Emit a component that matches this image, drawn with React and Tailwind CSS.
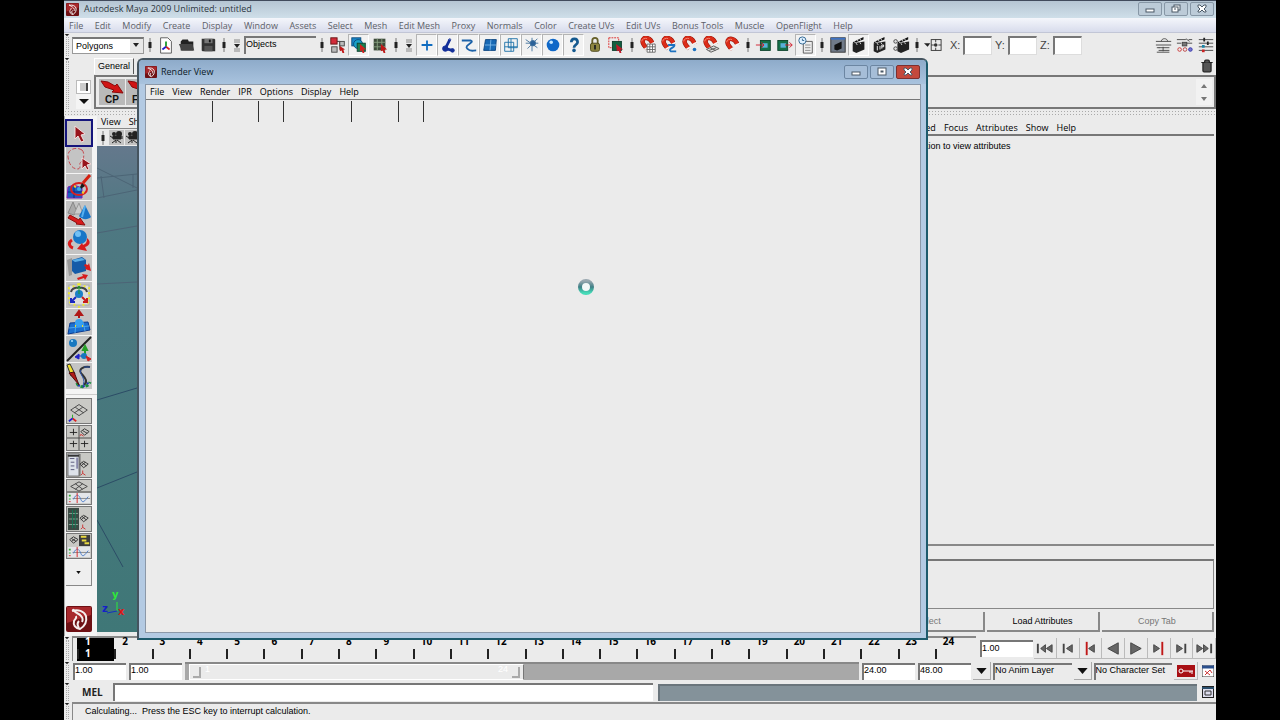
import React from 'react';
import { Trash2 } from 'lucide-react';

const MAIN_MENU = ['File', 'Edit', 'Modify', 'Create', 'Display', 'Window', 'Assets', 'Select', 'Mesh', 'Edit Mesh', 'Proxy', 'Normals', 'Color', 'Create UVs', 'Edit UVs', 'Bonus Tools', 'Muscle', 'OpenFlight', 'Help'];
const RENDER_MENU = ['File', 'View', 'Render', 'IPR', 'Options', 'Display', 'Help'];
const ATTR_MENU = ['List', 'Selected', 'Focus', 'Attributes', 'Show', 'Help'];
const FRAMES = Array.from({ length: 24 }, (_, i) => i + 1);

function Magnet() {
    return (
        <g fill="none">
            <path d="M15 9C13 1 4 0 4 6c0 3 2 5 5 8" stroke="#8e1208" strokeWidth="5" />
            <path d="M15 9C13 1 4 0 4 6c0 3 2 5 5 8" stroke="#dc2c18" strokeWidth="4" />
            <path d="M3 6c0-3 4-4 6-3" stroke="#f58a78" />
            <path d="M12 10l6-3M6 15l5-3" stroke="#f4f4f4" strokeWidth="2" />
            <path d="M10 10C7 7 9 5 12 9" fill="#ebebeb" />
        </g>
    );
}

function Clapper() {
    return (
        <g>
            <path d="M3 8l13-2v9l-9 4-4-2z" fill="#222" />
            <path d="M3 7L15 1v3L4 8z" fill="#111" />
            <path d="M5 6l1 2M8 4l1 2M11 3l1 2M7 8l1 2M11 7l1 2" stroke="#ddd" />
        </g>
    );
}

// 20x20 drawings for the status line
const STATUS_ICONS = {
    newScene: <g><path d="M4 2h8l4 4v13H4z" fill="#fff" stroke="#555" /><path d="M10 12V6" stroke="#1a9a2a" strokeWidth="2" /><path d="M10 12l4 3" stroke="#d22" strokeWidth="2" /><path d="M10 12l-4 3" stroke="#22c" strokeWidth="2" /></g>,
    open: <g><path d="M3 16V6l2-2h6l1 2h5v10z" fill="#222" /><path d="M1 9h15l2 7H4z" fill="#444" /></g>,
    save: <g><path d="M3 3h14l1 1v13H4l-1-1z" fill="#333" /><path d="M6 3h9v5H6z" fill="#777" /><path d="M11 4h2v3h-2z" fill="#111" /><path d="M6 11h9v6H6z" fill="#555" /></g>,
    hierarchy: <g><path d="M7 6h5v9h4M12 8h3" fill="none" stroke="#333" /><rect x="2" y="2" width="7" height="7" fill="#d22b3a" stroke="#611" /><rect x="3" y="12" width="6" height="6" fill="#bbb" stroke="#444" /><rect x="12" y="6" width="5" height="5" fill="#bbb" stroke="#444" /><path d="M12 11l6 4-2 0 1 4-2 0-1-3-2 1z" fill="#c01818" /></g>,
    object: <g><rect x="2" y="2" width="10" height="9" fill="#1786c8" stroke="#0b4a7a" /><circle cx="9" cy="9" r="5" fill="#18a0c8" stroke="#0b4a7a" /><rect x="8" y="8" width="9" height="9" fill="#1a8050" stroke="#0b4030" /><path d="M11 9l7 6-3 0 1 4-2 0-1-3-2 1z" fill="#d02020" /></g>,
    component: <g><path d="M3 3h13v13H3z" fill="#3d4a3a" /><path d="M3 7h13M3 12h13M7 3v13M12 3v13" stroke="#88a080" /><path d="M11 9l7 6-3 0 1 4-2 0-1-3-2 1z" fill="#c01818" /></g>,
    plus: <path d="M10 5v11M4 10h12" stroke="#0f6cc0" strokeWidth="2" />,
    joint: <g fill="none" stroke="#14309a"><path d="M12 4L7 14l8 2" strokeWidth="3" /><circle cx="12" cy="4" r="1" /><circle cx="7" cy="14" r="3" fill="#14309a" /><circle cx="15" cy="16" r="2" fill="#14309a" /></g>,
    curve: <path d="M2 5h10c5 2-8 5-4 9s6 2 10 2" fill="none" stroke="#1c62a8" strokeWidth="2" />,
    surface: <g><path d="M5 4h12l-1 12H3z" fill="#1769b5" stroke="#0d447e" /><path d="M11 4l-1 12M4 10h13" stroke="#7db8e8" /></g>,
    deform: <g fill="none" stroke="#1c70a8"><path d="M3 7h10v10H3zM7 3h10v10H7zM3 12h14M10 3v14" /></g>,
    dynamics: <g stroke="#3f6f9c"><path d="M3 4l13 9M10 2v15M16 3L5 14M3 8h14" /><circle cx="11" cy="8" r="3" fill="#2b6299" /></g>,
    rendering: <g><circle cx="10" cy="10" r="7" fill="#0f68c8" /><circle cx="8" cy="7" r="2" fill="#c4e6ff" /></g>,
    misc: <g><path d="M7 7c0-5 7-5 7 0 0 3-4 2-4 6" fill="none" stroke="#14598f" strokeWidth="3" /><circle cx="10" cy="16" r="2" fill="#14598f" /></g>,
    lock: <g><path d="M7 9V5c0-4 6-4 6 0v4" fill="none" stroke="#665f28" strokeWidth="2" /><rect x="5" y="8" width="10" height="9" rx="2" fill="#8d8540" stroke="#4a4518" /><path d="M10 10v5" stroke="#222" strokeWidth="2" /></g>,
    highlight: <g><rect x="2" y="2" width="11" height="11" fill="none" stroke="#d22" strokeDasharray="2 1" /><rect x="6" y="6" width="10" height="10" fill="#126040" stroke="#0a3a2a" /><path d="M10 9l8 6-3 0 1 4-2 0-1-3-2 1z" fill="#c01828" /></g>,
    snapGrid: <g><Magnet /><path d="M9 9h9v9H9zM9 12h9M9 15h9M12 9v9M15 9v9" fill="#fff" stroke="#666" /></g>,
    snapCurve: <g><Magnet /><path d="M9 10h7c1 3-8 4-4 7h6" fill="none" stroke="#1c72c0" strokeWidth="2" /></g>,
    snapPoint: <g><Magnet /><circle cx="15" cy="15" r="2" fill="#1c72c0" /></g>,
    snapPlane: <g><Magnet /><path d="M5 15l8-4 6 3-9 4zM9 13l6 3M8 16l8-3" fill="#ddd" stroke="#555" /></g>,
    makeLive: <g transform="translate(1 1)"><Magnet /></g>,
    inputs: <g><rect x="6" y="5" width="11" height="11" fill="#157048" stroke="#0a4028" /><rect x="8" y="8" width="6" height="5" fill="#58b0d8" /><path d="M1 10h9M7 7l3 3-3 3" fill="none" stroke="#d01828" /></g>,
    outputs: <g><rect x="2" y="5" width="11" height="11" fill="#157048" stroke="#0a4028" /><rect x="5" y="8" width="6" height="5" fill="#58b0d8" /><path d="M10 10h8M15 7l3 3-3 3" fill="none" stroke="#d01828" /></g>,
    history: <g><path d="M7 6h10v13H7z" fill="#eee" stroke="#555" /><path d="M9 10h6M9 13h6M9 16h6" stroke="#888" /><circle cx="6" cy="5" r="4" fill="#dff0ff" stroke="#28608c" /><path d="M6 3v2h2" fill="none" stroke="#28608c" /></g>,
    renderView: <g><rect x="2" y="2" width="16" height="16" fill="#707a88" stroke="#333" /><path d="M2 3h16" stroke="#3d72c4" strokeWidth="2" /><path d="M6 10l8-4v8l-5 2-3-1z" fill="#111" /></g>,
    render: <Clapper />,
    ipr: <g><Clapper /><path d="M7 11v5M10 11v4M12 14v-4h2v2h-2" stroke="#fff" fill="none" /></g>,
    renderSettings: <g><g transform="translate(3 0)"><Clapper /></g><circle cx="4" cy="6" r="2" fill="#ddd" stroke="#444" /><circle cx="4" cy="14" r="2" fill="#ddd" stroke="#444" /></g>,
    coords: <g><path d="M0 8h7l-3 4z" fill="#222" /><rect x="8" y="4" width="11" height="12" fill="none" stroke="#333" /><path d="M8 10h3M16 10h3M13 4v3M13 13v3" stroke="#333" /><circle cx="13" cy="10" r="2" fill="#333" /></g>,
    attrEditor: <g fill="none" stroke="#444"><path d="M1 6h17M1 10h17M4 13h12M4 16h12M9 12v5" /><path d="M7 6c0-4 7-4 7 0" /><path d="M2 13h3M2 18h14" /></g>,
    toolSettings: <g fill="none" stroke="#444"><path d="M1 4h10M14 4h4M1 8h5M9 8h9M11 3l4 3" /><rect x="7" y="7" width="5" height="4" fill="#777" /><circle cx="4" cy="15" r="2" stroke="#c33" /><circle cx="10" cy="15" r="2" stroke="#b44" /><circle cx="16" cy="15" r="2" stroke="#33a" fill="#77c" /></g>,
    channelBox: <g fill="none" stroke="#444"><path d="M2 4h16M2 8h16M2 12h16M2 16h16" /><path d="M8 2v4M12 6v4" stroke="#222" strokeWidth="2" /><path d="M7 10v3" stroke="#1784a8" strokeWidth="3" /><path d="M7 15v3" stroke="#c22" strokeWidth="3" /></g>,
};

function StatusButton({ name, pressed }) {
    return (
        <button aria-label={name} className={`flex h-[22px] w-[21px] shrink-0 items-center justify-center border ${pressed ? 'border-r-white border-b-white border-t-[#b4b4b4] border-l-[#b4b4b4] bg-[#f2f2f2]' : 'border-transparent'}`}>
            <svg viewBox="0 0 20 20" className="h-[18px] w-[18px] shrink-0">{STATUS_ICONS[name]}</svg>
        </button>
    );
}

function Separator() {
    return (
        <span className="flex w-[11px] shrink-0 items-center justify-center">
            <svg viewBox="0 0 5 20" className="h-5 w-[5px]"><path d="M3 3v14" stroke="#777" /><path d="M3 7v6" stroke="#222" strokeWidth="3" /></svg>
        </span>
    );
}

function Collapse() {
    return (
        <button aria-label="Show or hide icons" className="flex w-[15px] shrink-0 items-center justify-center">
            <svg viewBox="0 0 8 16" className="h-4 w-2" fill="none"><path d="M1 3h6M1 5h6M1 12h6M1 14h6" stroke="#888" /><path d="M1 7h6L4 11z" fill="#222" /></svg>
        </button>
    );
}

function Handle() {
    return (
        <span className="flex w-2 shrink-0 flex-col self-stretch">
            <svg viewBox="0 0 6 4" className="mt-px h-[3px] w-[6px]"><path d="M0 0h6L3 3z" fill="#222" /></svg>
            <span className="mb-px ml-[2px] w-[3px] flex-1 border-x border-dotted border-[#aaa]" />
        </span>
    );
}

function MayaLogo({ className }) {
    return (
        <svg viewBox="0 0 26 26" className={className}>
            <rect width="26" height="26" rx="2" fill="#6e1014" />
            <path d="M1 1h24v8L1 17z" fill="#a8282c" />
            <g fill="none" stroke="#f4eded" strokeWidth="2">
                <path d="M6 5c6-2 12 0 14 5 1 5-1 10-6 13-5-1-7-4-6-8 1-2 3-3 2-5" />
                <path d="M7 3c1 4 6 4 8 7 2 2 2 4 1 6M13 22c-2-3-2-5 0-7" />
            </g>
        </svg>
    );
}

function WindowButton({ label, children, className }) {
    return (
        <button aria-label={label} className={`flex h-[14px] w-6 items-center justify-center rounded-xs border ${className}`}>
            <svg viewBox="0 0 12 10" className="h-[10px] w-3" fill="#fff" stroke="#4a5866">{children}</svg>
        </button>
    );
}

const WINDOW_GLYPHS = {
    min: <rect x="2" y="5" width="8" height="3" />,
    max: <g><rect x="2" y="1" width="8" height="7" /><rect x="5" y="4" width="2" height="1" /></g>,
    restore: <g><rect x="4" y="1" width="6" height="5" /><rect x="2" y="3" width="6" height="5" /><path d="M4 5h2" /></g>,
    close: <path d="M2 1h2l2 2 2-2h2v2L8 5l2 2v1H8L6 6 4 8H2V7l2-2-2-2z" />,
};

function TitleBar() {
    return (
        <header className="flex h-[18px] items-center border-t border-[#414b5c] bg-linear-to-b from-[#b5c5d3] to-[#cfdfe9] pl-[2px]">
            <MayaLogo className="mr-[5px] h-[13px] w-[13px]" />
            <h1 className="flex-1 pb-px font-['Open_Sans',sans-serif] text-[9px] text-[#2c3640]">Autodesk Maya 2009 Unlimited: untitled</h1>
            <div className="flex gap-[2px] pr-[2px] pb-px">
                <WindowButton label="Minimize" className="border-[#8797a6] bg-[#bccbd8]">{WINDOW_GLYPHS.min}</WindowButton>
                <WindowButton label="Restore" className="border-[#8797a6] bg-[#bccbd8]">{WINDOW_GLYPHS.restore}</WindowButton>
                <WindowButton label="Close" className="border-[#8797a6] bg-[#bccbd8]">{WINDOW_GLYPHS.close}</WindowButton>
            </div>
        </header>
    );
}

function MenuBar({ items, className }) {
    return (
        <nav className={`flex items-center whitespace-nowrap font-['Open_Sans',sans-serif] text-[9px] ${className}`}>
            {items.map((item) => <button key={item}>{item}</button>)}
        </nav>
    );
}

function Coord({ axis }) {
    return (
        <label className="flex items-center text-[11px] text-[#444]">
            <span className="w-4 pl-[3px]">{axis}:</span>
            <input type="text" className="h-[19px] w-[29px] border border-t-2 border-l-2 border-[#ddd] border-t-[#777] border-l-[#777] bg-white" />
        </label>
    );
}

function StatusLine() {
    return (
        <section className="flex h-6 items-center">
            <Handle />
            <select aria-label="Menu set" className="h-[17px] w-[72px] shrink-0 appearance-none border border-t-2 border-[#999] border-t-[#777] bg-white bg-[linear-gradient(#e8e8e8,#e8e8e8)] bg-[length:13px_100%] bg-right bg-no-repeat pl-[3px] text-[9px] leading-[12px]">
                <option>Polygons</option>
            </select>
            <svg viewBox="0 0 6 4" className="-ml-[11px] mr-[5px] h-1 w-[6px] shrink-0"><path d="M0 0h6L3 4z" fill="#222" /></svg>
            <Separator />
            <StatusButton name="newScene" /><StatusButton name="open" /><StatusButton name="save" />
            <Separator />
            <Collapse />
            <input aria-label="Selection mask" type="text" defaultValue="Objects" className="h-[18px] w-[72px] shrink-0 border-t-2 border-l-2 border-[#777] bg-[#ebebeb] pb-1 text-[9px]" />
            <Separator />
            <StatusButton name="hierarchy" /><StatusButton name="object" pressed /><StatusButton name="component" />
            <Separator />
            <Collapse />
            {['plus', 'joint', 'curve', 'surface', 'deform', 'dynamics', 'rendering', 'misc'].map((n) => <StatusButton key={n} name={n} pressed />)}
            <StatusButton name="lock" /><StatusButton name="highlight" />
            <Separator />
            {['snapGrid', 'snapCurve', 'snapPoint', 'snapPlane', 'makeLive'].map((n) => <StatusButton key={n} name={n} />)}
            <Separator />
            <StatusButton name="inputs" /><StatusButton name="outputs" /><StatusButton name="history" pressed />
            <Separator />
            <StatusButton name="renderView" /><StatusButton name="render" pressed /><StatusButton name="ipr" /><StatusButton name="renderSettings" />
            <Separator />
            <StatusButton name="coords" />
            <div className="flex pl-1"><Coord axis="X" /><Coord axis="Y" /><Coord axis="Z" /></div>
            <div className="ml-auto flex"><StatusButton name="attrEditor" /><StatusButton name="toolSettings" /><StatusButton name="channelBox" /></div>
        </section>
    );
}

function ShelfButton({ label }) {
    return (
        <button aria-label={label} className="h-[26px] w-[26px] shrink-0 bg-[#b9b9b9]">
            <svg viewBox="0 0 26 26" className="h-full w-full">
                <path d="M2 2l7 1 7 4 2-2 6 9-11-1 2-2-9-3z" fill="#d01414" stroke="#8a0a0a" />
                <text x="6" y="24" fontFamily="Liberation Sans, sans-serif" fontSize="10" fontWeight="bold" fill="#111">{label}</text>
            </svg>
        </button>
    );
}

function Shelf() {
    return (
        <section className="flex h-[53px]">
            <Handle />
            <div className="flex w-[22px] flex-col justify-end pb-px">
                <button aria-label="Shelf tabs" className="ml-1 flex h-[14px] w-[15px] items-center justify-center border border-[#bbb] bg-white"><span className="h-2 w-2 border-r-2 border-[#444] bg-[#ccc]" /></button>
                <button aria-label="Shelf menu" className="ml-1 flex h-[15px] w-[15px] items-center justify-center bg-[#f4f4f4]">
                    <svg viewBox="0 0 10 6" className="h-[6px] w-[10px]"><path d="M0 0h10L5 5z" fill="#111" /></svg>
                </button>
            </div>
            <div className="flex min-w-0 flex-1 flex-col">
                <div className="flex h-[18px] items-center justify-between">
                    <button className="h-4 border-t border-l border-r border-white border-r-[#555] px-[3px] text-[9px]">General</button>
                    <button aria-label="Delete shelf item" className="pr-[2px]"><Trash2 className="h-[14px] w-[14px] fill-[#555] text-[#222]" /></button>
                </div>
                <div className="flex h-[34px] gap-px border-2 border-[#777] p-[2px] pl-[3px]">
                    <ShelfButton label="CP" />
                    <ShelfButton label="FT" />
                    <div className="ml-auto flex w-4 flex-col items-center justify-around bg-[#f2f2f2]">
                        <svg viewBox="0 0 6 4" className="h-1 w-[6px]"><path d="M0 4h6L3 0z" fill="#777" /></svg>
                        <svg viewBox="0 0 6 4" className="h-1 w-[6px]"><path d="M0 0h6L3 4z" fill="#777" /></svg>
                    </div>
                </div>
            </div>
        </section>
    );
}

const axes = <g><path d="M6 21v-4" stroke="#2a2" /><path d="M6 21l4 3" stroke="#d22" strokeWidth="2" /><path d="M6 21l-4 3" stroke="#22c" strokeWidth="2" /></g>;
const smallGrid = <path d="M14 12l4-3 5 3-5 4zM16 10l5 4M20 10l-5 4" fill="none" stroke="#333" />;
const wave = <g><rect x="1" y="14" width="24" height="11" fill="#e4e6ea" /><path d="M3 16v2M3 20v1" stroke="#3a3" strokeWidth="2" /><path d="M3 23v1" stroke="#d33" strokeWidth="2" /><path d="M6 20h19" stroke="#888" /><path d="M7 21c3-7 6-5 8 0s4 2 8-3" fill="none" stroke="#4a7cc8" /><path d="M11 14v11" stroke="#d22" /></g>;

// 26x26 drawings for the tool box and the layout shortcuts
const TOOLS = [
    ['Select', <path d="M9 6l0 13 3-3 3 6 3-1-3-6 4-1z" fill="#98141c" stroke="#f3dede" strokeWidth="1" />],
    ['Lasso', <g><path d="M16 3C9-1 1 3 2 10s4 12 10 12c4-1 0-5 3-7s4-9 1-12z" fill="none" stroke="#c44a50" strokeWidth="1" strokeDasharray="4 2" /><path d="M16 11v11l3-3 2 4 2-1-2-4 4-1z" fill="#98141c" stroke="#f3dede" /></g>],
    ['Paint select', <g><path d="M2 13l6-2 8 3 0 10H1z" fill="#1c5fc0" stroke="#7a20b8" /><path d="M2 18h14M8 12v12" stroke="#0c2a80" /><ellipse cx="13" cy="15" rx="8" ry="6" fill="none" stroke="#d82020" strokeWidth="2" /><path d="M12 17l4-8 3 3z" fill="#1a1a1a" /><path d="M17 9l7-8" stroke="#d42010" strokeWidth="3" /><circle cx="13" cy="15" r="2" fill="#38b0e8" /><path d="M8 12l2 1M16 18l2 1" stroke="#f8d020" strokeWidth="2" /></g>],
    ['Move', <g><path d="M2 12L7 1l4 10-3 3z" fill="#aaa" stroke="#888" /><path d="M8 13l5-11 4 11z" fill="#ccc" stroke="#999" /><path d="M13 15l6-11 6 12c-3 3-9 3-12-1z" fill="#1874c8" /><path d="M19 5l-3 11" stroke="#55b0f0" strokeWidth="2" /><path d="M4 14l9 5 1-2 5 7-9-1 1-1-9-5z" fill="#d81c1c" stroke="#901010" /></g>],
    ['Rotate', <g><path d="M6 12c-5 3-2 7 1 8" fill="none" stroke="#d81c1c" strokeWidth="3" /><circle cx="14" cy="9" r="7" fill="#1877c8" /><circle cx="12" cy="6" r="3" fill="#72c0f4" /><path d="M21 10c5 4 2 8-2 9l2 4-10-2 5-6 1 2c3-1 4-3 4-7z" fill="#d81c1c" /></g>],
    ['Scale', <g><path d="M1 5l5-2v17l-3 1z" fill="#999" /><path d="M6 5l10-3 4 3v11l-11 3-3-3z" fill="#145ba8" /><path d="M6 5l10-2 3 2-10 2z" fill="#58aee8" /><path d="M19 9l3 1 1-2 2 8-6-2 1-2-2-1z" fill="#d81c1c" /><path d="M11 23l6-2-1-2 6 1-3 5-1-2-6 2z" fill="#d81c1c" /></g>],
    ['Universal manipulator', <g><rect x="3" y="3" width="20" height="20" fill="#ddd" stroke="#aaa" /><path d="M13 2l10 4v14l-10 5L3 20V6z" fill="none" stroke="#eee830" strokeDasharray="2 3" strokeWidth="2" /><path d="M5 10c1-6 15-6 16 0" fill="none" stroke="#444" strokeWidth="2" /><circle cx="13" cy="12" r="4" fill="#1c80c8" /><path d="M13 12V5M11 7l2-3 2 3" stroke="#189828" fill="none" /><path d="M10 15l-4 4M5 16l0 4h4" stroke="#1a28c0" strokeWidth="2" fill="none" /><path d="M16 15l4 4M21 16v4h-4" stroke="#c81c1c" strokeWidth="2" fill="none" /></g>],
    ['Soft modification', <g><path d="M4 14l18-1 2 8-22 4z" fill="#1c70d0" stroke="#0c3c90" /><path d="M3 19l20-2M10 14l-1 10M17 13l2 9" stroke="#48a8f0" /><circle cx="13" cy="14" r="4" fill="#38a0f0" /><path d="M13 9V4M10 6l3-4 3 4z" stroke="#b01818" strokeWidth="2" fill="#b01818" /><path d="M9 17h1M16 17h1" stroke="#f8e020" strokeWidth="2" /></g>],
    ['Show manipulator', <g><path d="M1 25L25 1" stroke="#222" strokeWidth="2" /><circle cx="7" cy="7" r="4" fill="#1878c0" /><circle cx="6" cy="5" r="1" fill="#a8e0ff" /><path d="M19 20v-6M17 14l2-4 2 4z" stroke="#28a028" fill="#28a028" strokeWidth="2" /><path d="M18 20h-6M13 18l-4 3 4 2z" stroke="#2020c8" fill="#2020c8" /><circle cx="18" cy="20" r="3" fill="#1878c0" /><path d="M20 20l5 3-3 2z" fill="#d02020" stroke="#d02020" /></g>],
    ['Last tool', <g fill="none"><path d="M24 4c-6-1-12 2-9 6s8 8 3 12" stroke="#333" strokeWidth="2" /><path d="M15 7c-3 4 7 9 1 17M18 4l6 0" stroke="#2850a8" /><path d="M11 20c1 5 11 5 13-1" stroke="#1c9040" strokeWidth="3" strokeDasharray="3 2" /><path d="M12 22c4 3 8 1 11-3" stroke="#2038b8" strokeWidth="2" strokeDasharray="2 3" /><path d="M1 2l3-1 5 10-4 2z" fill="#f0e030" stroke="#333" /><path d="M3 10l5-1 5 13z" fill="#b01c18" stroke="#501010" /></g>],
];
const LAYOUTS = [
    ['Single perspective', <g><path d="M4 12l9-6 9 6-9 6zM9 9l9 6M17 9l-9 6" fill="none" stroke="#444" strokeWidth="1" />{axes}</g>],
    ['Four views', <g><path d="M13 0v26M0 13h26" stroke="#444" /><path d="M7 3v7M3 7h8M7 16v7M3 19h8M19 16v7M15 19h8" stroke="#222" /><path d="M15 6l4-3 5 3-5 4zM17 5l5 3" fill="none" stroke="#333" /><path d="M15 9l-1 2M15 9l3 2" stroke="#c33" /></g>],
    ['Outliner', <g><rect x="1" y="1" width="12" height="24" fill="#dde2ea" stroke="#666" /><path d="M1 3h12" stroke="#333" strokeWidth="2" /><path d="M3 6h5M4 10h4M4 14h4M4 18h4" stroke="#557" /><path d="M11 5v12" stroke="#88a" strokeWidth="2" /><path d="M14 1v24" stroke="#555" />{smallGrid}<path d="M17 22v-3M17 22l3 2M17 22l-2 2" stroke="#c33" /></g>],
    ['Perspective and graph', <g><path d="M4 7l9-5 9 5-9 5zM9 4l8 6M17 4L9 10" fill="none" stroke="#444" />{wave}<path d="M0 13h26" stroke="#333" /></g>],
    ['Hypershade', <g><rect x="1" y="1" width="12" height="24" fill="#3c4a44" /><path d="M2 7h10M2 13h10M2 19h10" stroke="#8a9" /><path d="M6 3v20M9 3v20" stroke="#175" />{smallGrid}<path d="M17 22v-3M17 22l3 2M17 22l-2 2" stroke="#c33" /></g>],
    ['Hypergraph', <g><rect x="13" y="1" width="12" height="12" fill="#3c3c3c" /><path d="M15 3h6M16 7h5M19 10h5" stroke="#e8d840" strokeWidth="2" /><path d="M3 6l4-3 5 3-5 4zM5 5l5 3M9 5L5 8" fill="none" stroke="#333" />{wave}</g>],
];

function ToolBox() {
    return (
        <aside className="flex w-[33px] shrink-0 flex-col border-l border-[#aaa] bg-[#f4f4f4] pl-px">
            <div className="flex flex-col gap-px pt-1">
                {TOOLS.map(([name, icon], i) => (
                    <button key={name} aria-label={name} className={`h-[26px] w-[26px] bg-[#c4c4c4] ${i === 0 ? 'outline-2 -outline-offset-1 outline-[#15157c]' : ''}`}>
                        <svg viewBox="0 0 26 26" className="h-full w-full">{icon}</svg>
                    </button>
                ))}
            </div>
            <div className="mt-[5px] flex flex-col gap-px border-t border-[#ccc] pt-[3px]">
                {LAYOUTS.map(([name, icon]) => (
                    <button key={name} aria-label={name} className="h-[26px] w-[26px] border border-[#777] bg-[#c9c9c5]">
                        <svg viewBox="0 0 26 26" className="h-full w-full">{icon}</svg>
                    </button>
                ))}
                <button aria-label="More layouts" className="flex h-[26px] w-[26px] items-center justify-center border-r border-b border-[#888] bg-[#efefef]">
                    <svg viewBox="0 0 6 4" className="h-[3px] w-[5px]"><path d="M0 0h6L3 4z" fill="#111" /></svg>
                </button>
            </div>
            <MayaLogo className="mt-auto mb-1 h-[26px] w-[26px]" />
        </aside>
    );
}

function CameraButton({ label }) {
    return (
        <button aria-label={label} className="h-[15px] w-[15px] bg-[#c2c2c2]">
            <svg viewBox="0 0 15 15" className="h-full w-full"><circle cx="5" cy="4" r="2" fill="#222" /><circle cx="10" cy="4" r="3" fill="#222" /><path d="M4 6h8v3H4zM1 6l3 2M13 6v3M7 10l-4 3M8 10l4 3M7 10v3" fill="#222" stroke="#222" /></svg>
        </button>
    );
}

function Viewport() {
    return (
        <section className="flex min-w-0 flex-1 flex-col pb-1">
            <MenuBar items={['View', 'Shading', 'Lighting', 'Show', 'Renderer', 'Panels']} className="h-3 gap-2 pl-1 text-black" />
            <div className="flex h-[18px] items-center gap-px border-t border-[#888]">
                <Separator />
                <CameraButton label="Select camera" />
                <CameraButton label="Camera attributes" />
            </div>
            <div className="min-h-0 flex-1 bg-linear-to-b from-[#64788c] via-[#4e7882] via-15% to-[#3f7777]">
                <svg className="h-full w-full" fill="none">
                    <path d="M0 22l40 20M0 32l40-4M4 30l3 22M36 28v14M0 52l40-8M0 87l40-7M0 138l40-2" stroke="#4c6476" />
                    <path d="M0 254l40-12M0 342l40-16M0 374l26 47" stroke="#2c4c66" />
                    <path d="M20 465v-9" stroke="#2fe83a" />
                    <path d="M20 465l-10 2" stroke="#1430c0" />
                    <text x="15" y="452" fontFamily="DejaVu Sans, sans-serif" fontSize="10" fontWeight="bold" fill="#2fe83a">y</text>
                    <text x="5" y="466" fontFamily="DejaVu Sans, sans-serif" fontSize="10" fontWeight="bold" fill="#1420c8">z</text>
                    <text x="21" y="469" fontFamily="DejaVu Sans, sans-serif" fontSize="10" fontWeight="bold" fill="#e01818">x</text>
                </svg>
            </div>
        </section>
    );
}

function AttributeEditor() {
    return (
        <section className="flex w-[343px] shrink-0 flex-col pr-[2px]">
            <MenuBar items={ATTR_MENU} className="h-5 gap-2 border-b-2 border-[#777] pt-[6px] pl-[5px] text-black" />
            <p className="flex-1 pt-1 text-[9px] text-black">Make a selection to view attributes</p>
            <hr className="border-t-2 border-[#888]" />
            <textarea aria-label="Notes" className="mt-[13px] h-[50px] resize-none border border-t-2 border-[#888] border-t-[#777]" />
            <div className="mt-[3px] mb-1 flex h-5 gap-[2px] text-[9px]">
                <button disabled className="flex-1 border-r-2 border-b-2 border-[#888] pt-[2px] text-[#777]">Select</button>
                <button className="flex-1 border-r-2 border-b-2 border-[#888] pt-[2px]">Load Attributes</button>
                <button disabled className="flex-1 border-r-2 border-b-2 border-[#888] pt-[2px] text-[#777]">Copy Tab</button>
            </div>
        </section>
    );
}

const PLAYBACK = [
    ['Go to start', <g><path d="M3 5v10" strokeWidth="2" /><path d="M11 6v8l-5-4zM18 6v8l-6-4z" /></g>],
    ['Step back', <g><path d="M6 5v10" strokeWidth="2" /><path d="M15 6v8l-6-4z" /></g>],
    ['Previous key', <g><path d="M6 3v14" stroke="#c01818" strokeWidth="2" /><path d="M14 6v8l-6-4z" /></g>],
    ['Play backwards', <path d="M15 4v12L4 10z" />],
    ['Play forwards', <path d="M5 4v12l11-6z" />],
    ['Next key', <g><path d="M5 6v8l6-4z" /><path d="M14 3v14" stroke="#c01818" strokeWidth="2" /></g>],
    ['Step forward', <g><path d="M5 6v8l6-4z" /><path d="M14 5v10" strokeWidth="2" /></g>],
    ['Go to end', <g><path d="M2 6v8l6-4zM9 6v8l5-4z" /><path d="M17 5v10" strokeWidth="2" /></g>],
];

function NumberField({ label, value }) {
    return <input aria-label={label} type="text" defaultValue={value} className="h-[17px] w-[53px] shrink-0 border-t-2 border-l-2 border-[#777] bg-white pb-1 text-[9px]" />;
}

function TimeSlider() {
    return (
        <section className="flex h-[25px]">
            <Handle />
            <div className="flex min-w-0 flex-1 border-t-2 border-l border-[#888] pr-1 pl-1">
                {FRAMES.map((frame) => (
                    <div key={frame} className={`flex flex-1 flex-col justify-between font-['Open_Sans',sans-serif] text-[10px] font-bold ${frame === 1 ? 'bg-black text-white' : 'text-black'}`}>
                        <span className="pl-2 leading-[7px]">{frame}</span>
                        <span className="mb-[2px] h-[10px] border-l-2 border-[#222] pl-[6px] leading-[8px]">{frame === 1 ? '1' : ''}</span>
                    </div>
                ))}
            </div>
            <div className="flex w-[240px] shrink-0 items-center pl-1">
                <NumberField label="Current time" value="1.00" />
                <div className="flex flex-1 pl-px">
                    {PLAYBACK.map(([name, icon]) => (
                        <button key={name} aria-label={name} className="flex h-[21px] flex-1 items-center justify-center border-r border-b border-[#bbb]">
                            <svg viewBox="0 0 20 20" className="h-[19px] w-[19px]" fill="#666" stroke="#444">{icon}</svg>
                        </button>
                    ))}
                </div>
            </div>
        </section>
    );
}

function DropButton({ label }) {
    return (
        <button aria-label={label} className="flex h-[18px] w-[18px] shrink-0 items-center justify-center border-r border-b border-[#aaa]">
            <svg viewBox="0 0 12 7" className="h-[6px] w-[11px]"><path d="M0 0h12L6 7z" fill="#111" /></svg>
        </button>
    );
}

function RangeSlider() {
    return (
        <section className="flex h-5 items-center">
            <Handle />
            <div className="flex min-w-0 flex-1 items-center gap-[3px] pl-px">
                <NumberField label="Animation start" value="1.00" />
                <NumberField label="Playback start" value="1.00" />
                <div className="flex h-[18px] min-w-0 flex-1 border-t-2 border-[#888] bg-[#a8a8a8] pl-1">
                    <div className="flex w-1/2 items-center border border-white border-r-[#777] bg-[#ebebeb] px-[3px] text-[9px] leading-[9px] text-white">
                        <span className="h-[11px] w-2 border-r-2 border-b-2 border-[#aaa]" />
                        <span className="flex-1 self-start pl-1">1</span>
                        <span className="self-start pr-1">24</span>
                        <span className="h-[11px] w-2 border-r-2 border-b-2 border-[#aaa]" />
                    </div>
                </div>
                <NumberField label="Playback end" value="24.00" />
                <NumberField label="Animation end" value="48.00" />
            </div>
            <div className="flex w-[245px] shrink-0 items-center gap-[2px] pl-[2px]">
                <DropButton label="Animation layers" />
                <input aria-label="Animation layer" type="text" defaultValue="No Anim Layer" className="h-[17px] w-0 flex-1 border-t-2 border-l-2 border-[#777] pb-1 text-[9px]" />
                <DropButton label="Character sets" />
                <input aria-label="Character set" type="text" defaultValue="No Character Set" className="h-[17px] w-0 flex-1 border-t-2 border-l-2 border-[#777] pb-1 text-[9px]" />
                <button aria-label="Auto keyframe" className="flex h-[18px] w-6 items-center justify-center border-r border-b border-[#bbb]">
                    <svg viewBox="0 0 18 12" className="h-3 w-[18px] bg-[#a80f14]"><circle cx="4" cy="6" r="2" fill="none" stroke="#fff" /><path d="M6 6h10M15 6v3M13 6v2" stroke="#fff" /></svg>
                </button>
                <button aria-label="Preferences" className="flex h-[18px] w-4 items-center justify-center">
                    <svg viewBox="0 0 12 12" className="h-3 w-3"><path d="M0 0h12v12H0z" fill="#fff" stroke="#333" /><path d="M0 2h12" stroke="#2a4f8c" strokeWidth="3" /><path d="M3 10l5-5M8 5l2 3M3 6l5 4" stroke="#c33" /></svg>
                </button>
            </div>
        </section>
    );
}

function CommandLine() {
    return (
        <section className="mt-px flex h-5 items-center">
            <Handle />
            <label htmlFor="mel" className="w-[41px] shrink-0 pl-[10px] font-['Open_Sans',sans-serif] text-[10px] font-bold text-[#222]">MEL</label>
            <input id="mel" type="text" className="h-[18px] w-0 flex-1 border-t-2 border-l-2 border-[#777] bg-white" />
            <output className="mr-[3px] ml-[5px] h-[17px] flex-1 border-t-2 border-l-2 border-[#6a757c] bg-[#84929a]" />
            <button aria-label="Script editor" className="flex h-[18px] w-4 items-center justify-center">
                <svg viewBox="0 0 12 12" className="h-3 w-3"><path d="M0 0h12v12H0z" fill="#dde" stroke="#222" strokeWidth="2" /><path d="M0 2h12" stroke="#2a4f6c" strokeWidth="2" /><path d="M3 5h6v4H3z" fill="none" stroke="#333" /></svg>
            </button>
        </section>
    );
}

function RenderViewWindow() {
    return (
        <div role="dialog" aria-label="Render View" className="absolute top-[58px] right-[288px] bottom-[80px] left-[73px] flex flex-col rounded-t-md border-2 border-[#45545f] border-r-[#1d5a6c] border-b-[#1d5a6c] bg-[#b3cae3] pr-[5px] pb-[5px] pl-[6px]">
            <header className="-mr-[5px] -ml-[6px] flex h-6 shrink-0 items-center rounded-t bg-linear-to-b from-[#8eabca] to-[#a9c3de] px-[6px]">
                <MayaLogo className="mr-1 h-3 w-3" />
                <h2 className="flex-1 font-['Open_Sans',sans-serif] text-[9px] text-[#0c1a28]">Render View</h2>
                <div className="flex gap-[2px]">
                    <WindowButton label="Minimize" className="border-[#6c86a2] bg-[#a6bed8]">{WINDOW_GLYPHS.min}</WindowButton>
                    <WindowButton label="Maximize" className="border-[#6c86a2] bg-[#a6bed8]">{WINDOW_GLYPHS.max}</WindowButton>
                    <WindowButton label="Close" className="border-[#7c3030] bg-[#c4493c]">{WINDOW_GLYPHS.close}</WindowButton>
                </div>
            </header>
            <div className="flex min-h-0 flex-1 flex-col border border-[#8b98a8] bg-[#ebebeb]">
                <MenuBar items={RENDER_MENU} className="h-[14px] shrink-0 gap-2 pl-1 text-black" />
                {/* empty toolbar, only the group dividers are up */}
                <div className="flex h-[23px] shrink-0 border-t border-[#777] pt-px">
                    <span className="w-[67px] border-r border-[#333]" />
                    <span className="w-[46px] border-r border-[#333]" />
                    <span className="w-[25px] border-r border-[#333]" />
                    <span className="w-[68px] border-r border-[#333]" />
                    <span className="w-[47px] border-r border-[#333]" />
                    <span className="w-[25px] border-r border-[#333]" />
                </div>
            </div>
            {/* busy cursor */}
            <svg viewBox="0 0 16 16" className="absolute top-[219px] left-[439px] h-4 w-4">
                <defs>
                    <linearGradient id="busy" x1="0" y1="0" x2="0" y2="1">
                        <stop offset="0" stopColor="#9aa8b0" />
                        <stop offset="0.5" stopColor="#3f7f86" />
                        <stop offset="1" stopColor="#45dcb8" />
                    </linearGradient>
                </defs>
                <circle cx="8" cy="8" r="6" fill="#f4f8f8" stroke="url(#busy)" strokeWidth="4" />
            </svg>
        </div>
    );
}

export default function App() {
    return (
        <div className="min-h-screen bg-black px-16">
            <main className="relative flex h-screen flex-col bg-[#ebebeb] font-['Liberation_Sans',Arial,sans-serif] text-black">
                <TitleBar />
                <MenuBar items={MAIN_MENU} className="h-[15px] justify-between border-b border-[#c2c6d6] bg-linear-to-b from-[#f4f6fb] to-[#d8dcec] pt-px pr-[363px] pl-[5px] text-[#5c6068]" />
                <StatusLine />
                <Shelf />
                <div className="h-[6px] bg-[radial-gradient(#aaa_30%,transparent_40%)] bg-size-[3px_3px]" />
                <div className="flex min-h-0 flex-1">
                    <ToolBox />
                    <Viewport />
                    <AttributeEditor />
                </div>
                <TimeSlider />
                <RangeSlider />
                <CommandLine />
                <footer className="flex h-[18px] items-center">
                    <Handle />
                    <p className="flex-1 self-stretch border-t-2 border-l border-[#888] pl-3 text-[9px] leading-[14px] whitespace-pre">Calculating...  Press the ESC key to interrupt calculation.</p>
                </footer>
                <RenderViewWindow />
            </main>
        </div>
    );
}
